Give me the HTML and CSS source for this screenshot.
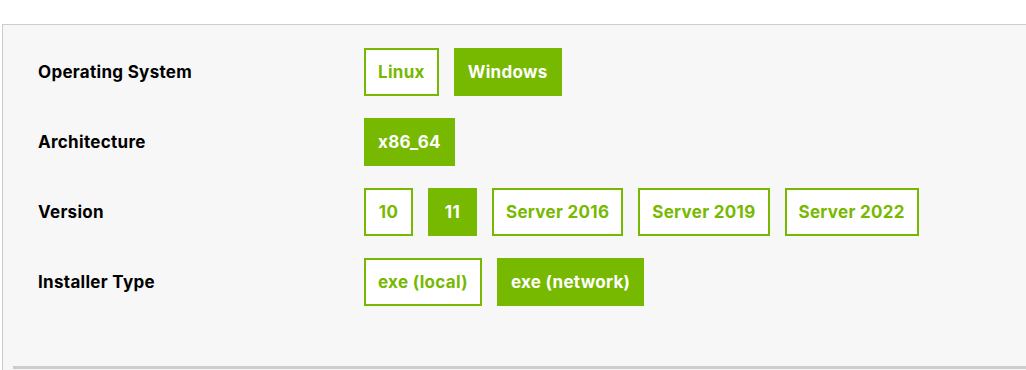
FILE: index.html
```html
<!DOCTYPE html>
<html lang="en">
<head>
    <meta charset="UTF-8">
    <meta name="viewport" content="width=device-width, initial-scale=1.0">
    <title>Select Target Platform</title>
    <link rel="stylesheet" href="styles.css">
</head>
<body>
    <div class="selector-panel">
        <div class="selector-row">
            <div class="row-label">Operating System</div>
            <div class="row-options">
                <button class="opt">Linux</button>
                <button class="opt active">Windows</button>
            </div>
        </div>
        <div class="selector-row">
            <div class="row-label">Architecture</div>
            <div class="row-options">
                <button class="opt active">x86_64</button>
            </div>
        </div>
        <div class="selector-row">
            <div class="row-label">Version</div>
            <div class="row-options">
                <button class="opt">10</button>
                <button class="opt active">11</button>
                <button class="opt">Server 2016</button>
                <button class="opt">Server 2019</button>
                <button class="opt">Server 2022</button>
            </div>
        </div>
        <div class="selector-row">
            <div class="row-label">Installer Type</div>
            <div class="row-options">
                <button class="opt">exe (local)</button>
                <button class="opt active">exe (network)</button>
            </div>
        </div>
        <div class="panel-rule"></div>
    </div>
</body>
</html>
```

FILE: styles.css
```css
body {
    margin: 0;
    padding: 0;
    background: #fff;
    font-family: 'Inter', sans-serif;
    color: #000;
}
.selector-panel {
    margin: 24px 0 0 2px;
    height: 346px;
    box-sizing: border-box;
    background: #f7f7f7;
    border-top: 1px solid #cccccc;
    border-left: 1px solid #cccccc;
    padding: 23px 0 0 35px;
    display: flex;
    flex-direction: column;
    gap: 22px;
    position: relative;
}
.selector-row {
    display: flex;
    align-items: center;
}
.row-label {
    width: 326px;
    font-size: 17px;
    font-weight: 700;
    letter-spacing: 0.3px;
}
.row-options {
    display: flex;
    gap: 15px;
}
.opt {
    height: 48px;
    min-width: 49px;
    padding: 0 12px;
    border: 2px solid #76b900;
    background: #fff;
    color: #76b900;
    font-family: inherit;
    font-size: 17px;
    font-weight: 700;
    letter-spacing: 0.3px;
    cursor: pointer;
}
.opt.active {
    background: #76b900;
    color: #fff;
}
.panel-rule {
    position: absolute;
    left: 10px;
    right: 0;
    bottom: 1px;
    border-top: 3px solid #cccccc;
}
```
